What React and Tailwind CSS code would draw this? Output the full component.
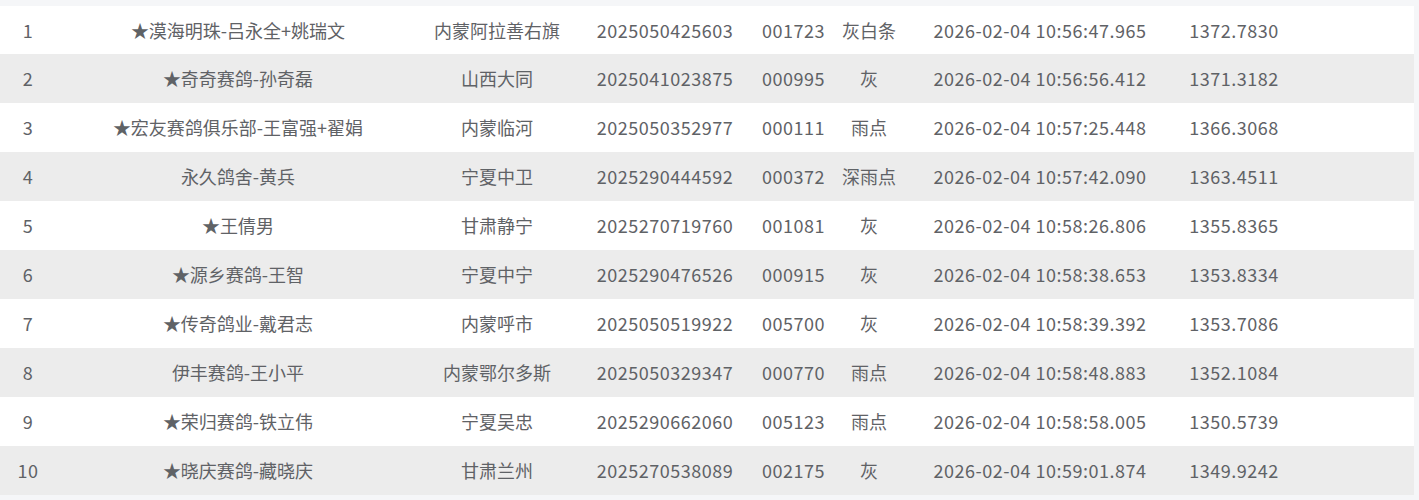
import React from 'react';

const rows = [
  [1, '★漠海明珠-吕永全+姚瑞文', '内蒙阿拉善右旗', '2025050425603', '001723', '灰白条', '2026-02-04 10:56:47.965', '1372.7830'],
  [2, '★奇奇赛鸽-孙奇磊', '山西大同', '2025041023875', '000995', '灰', '2026-02-04 10:56:56.412', '1371.3182'],
  [3, '★宏友赛鸽俱乐部-王富强+翟娟', '内蒙临河', '2025050352977', '000111', '雨点', '2026-02-04 10:57:25.448', '1366.3068'],
  [4, '永久鸽舍-黄兵', '宁夏中卫', '2025290444592', '000372', '深雨点', '2026-02-04 10:57:42.090', '1363.4511'],
  [5, '★王倩男', '甘肃静宁', '2025270719760', '001081', '灰', '2026-02-04 10:58:26.806', '1355.8365'],
  [6, '★源乡赛鸽-王智', '宁夏中宁', '2025290476526', '000915', '灰', '2026-02-04 10:58:38.653', '1353.8334'],
  [7, '★传奇鸽业-戴君志', '内蒙呼市', '2025050519922', '005700', '灰', '2026-02-04 10:58:39.392', '1353.7086'],
  [8, '伊丰赛鸽-王小平', '内蒙鄂尔多斯', '2025050329347', '000770', '雨点', '2026-02-04 10:58:48.883', '1352.1084'],
  [9, '★荣归赛鸽-铁立伟', '宁夏吴忠', '2025290662060', '005123', '雨点', '2026-02-04 10:58:58.005', '1350.5739'],
  [10, '★晓庆赛鸽-藏晓庆', '甘肃兰州', '2025270538089', '002175', '灰', '2026-02-04 10:59:01.874', '1349.9242'],
];

const numCols = [0, 3, 4, 6, 7];

export default function App() {
  return (
    <div className="w-full h-[500px] bg-[#f5f6f8] pt-[6px] overflow-hidden">
      <div
        className="w-[1414px] bg-white text-[18px] text-[#5f6266]"
        style={{ fontFamily: '"Microsoft YaHei", "Noto Sans CJK SC", "Noto Sans", sans-serif' }}
      >
        {rows.map((r, i) => (
          <div
            key={r[0]}
            className={`grid grid-cols-[56px_364px_154px_182px_75px_76px_266px_122px_1fr] items-center text-center whitespace-nowrap ${
              i === 0 ? 'h-[48px]' : 'h-[49px]'
            } ${i % 2 === 1 ? 'bg-[#ececec]' : 'bg-white'}`}
          >
            {r.map((c, j) => (
              <div key={j} className={numCols.includes(j) ? 'tracking-[0.5px]' : ''}>
                {c}
              </div>
            ))}
            <div />
          </div>
        ))}
      </div>
    </div>
  );
}
